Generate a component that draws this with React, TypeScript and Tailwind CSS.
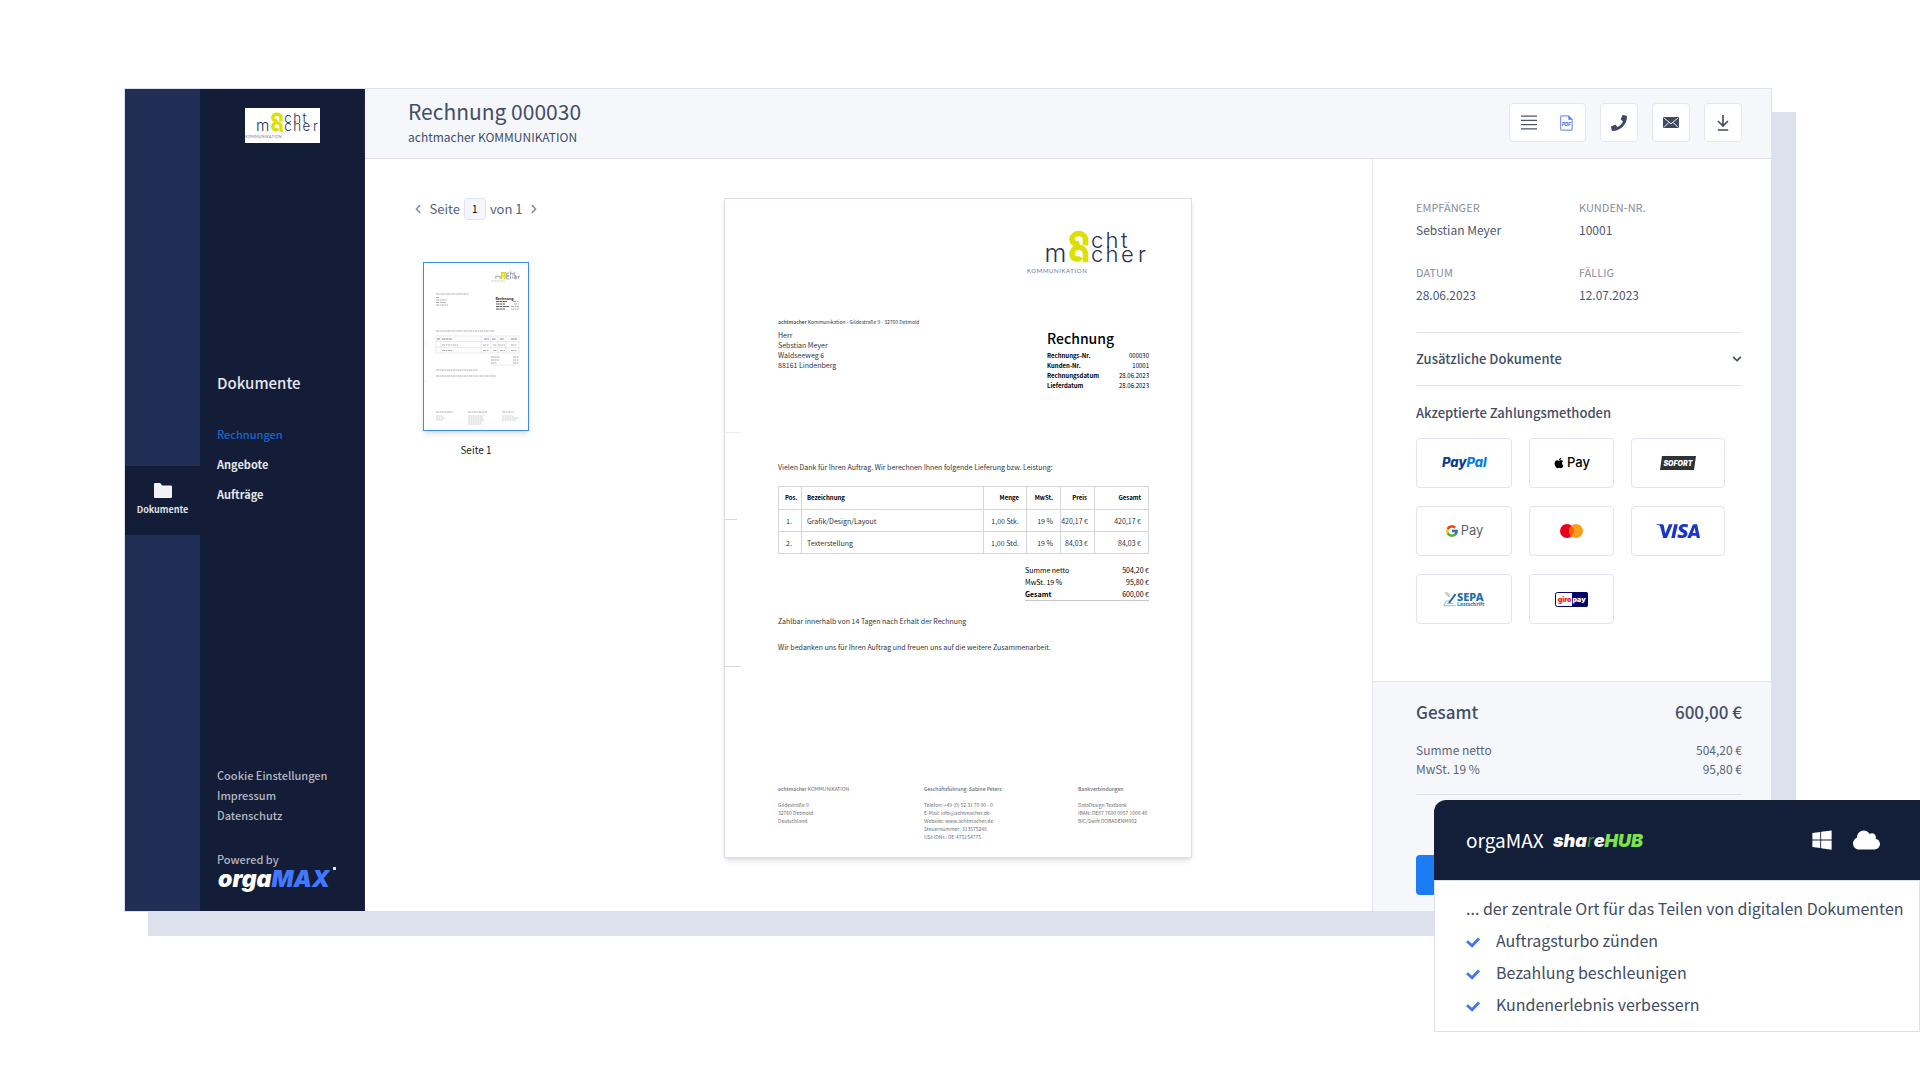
import React from 'react';
import { FaApple, FaChevronDown, FaChevronLeft, FaChevronRight, FaCloud, FaPhone, FaWindows } from 'react-icons/fa';
import { FcGoogle } from 'react-icons/fc';
import { SiVisa } from 'react-icons/si';

const footerLinks = ['Cookie Einstellungen', 'Impressum', 'Datenschutz'];

const details = [
  { label: 'EMPFÄNGER', value: 'Sebstian Meyer' },
  { label: 'KUNDEN-NR.', value: '10001' },
  { label: 'DATUM', value: '28.06.2023' },
  { label: 'FÄLLIG', value: '12.07.2023' },
];

const invoiceMeta = [
  ['Rechnungs-Nr.', '000030'],
  ['Kunden-Nr.', '10001'],
  ['Rechnungsdatum', '28.06.2023'],
  ['Lieferdatum', '28.06.2023'],
];

const positions = [
  { pos: '1.', name: 'Grafik/Design/Layout', amount: '1,00 Stk.', tax: '19 %', price: '420,17 €', total: '420,17 €' },
  { pos: '2.', name: 'Texterstellung', amount: '1,00 Std.', tax: '19 %', price: '84,03 €', total: '84,03 €' },
];

const benefits = ['Auftragsturbo zünden', 'Bezahlung beschleunigen', 'Kundenerlebnis verbessern'];

const CompanyLogo: React.FC<{ className?: string }> = ({ className }) => (
  <svg viewBox="0 0 122 46" className={className} role="img" aria-label="achtmacher Kommunikation">
    <g fill="none" stroke="#dde005" strokeWidth="5.5">
      <path d="M52.5 13.2 C48 15 45 12.5 45 9 A6.8 6.3 0 0 1 58.5 9 V15" />
      <path d="M53.5 27 C51.5 30.5 45 29.5 45 23.5 A6.8 7 0 0 1 58.5 23.5 V32.3" />
    </g>
    <g fill="#2a3157" fontFamily="Inter, sans-serif" fontWeight="300" fontSize="22">
      <text x="17.5" y="32" fontSize="25">m</text>
      <text y="18" x="64 78.500 94">cht</text>
      <text y="32" x="64 78.500 94 111">cher</text>
    </g>
    <text x="0" y="43" fill="#6d7390" fontFamily="Lato, sans-serif" fontSize="6" letterSpacing="0.6">KOMMUNIKATION</text>
  </svg>
);

const FolderIcon: React.FC = () => (
  <svg viewBox="0 0 18 15" className="w-[18px] h-[15px]" fill="#f1f2f6">
    <path d="M1 0h5.2l2 2.4H17a1 1 0 0 1 1 1V14a1 1 0 0 1-1 1H1a1 1 0 0 1-1-1V1a1 1 0 0 1 1-1z" />
  </svg>
);

const LinesIcon: React.FC = () => (
  <svg viewBox="0 0 16 15" className="w-4 h-[15px]" fill="none" stroke="#4a5468" strokeWidth="1.3">
    <path d="M0 1.2h16M0 5.4h16M0 9.6h16M0 13.8h16" />
  </svg>
);

const PdfIcon: React.FC = () => (
  <svg viewBox="0 0 13 16" className="w-[13px] h-4" fill="none" stroke="#7f97ee" strokeWidth="1.2">
    <path d="M1.6.8h6.9l3.7 3.7v9.7a1 1 0 0 1-1 1H1.6a1 1 0 0 1-1-1V1.8a1 1 0 0 1 1-1z" />
    <path d="M8.3.8v3.9h3.9z" fill="#5d7ae8" stroke="none" />
    <text x="6.4" y="11" textAnchor="middle" fontSize="4.4" fontWeight="800" fontStyle="italic" fontFamily="Inter, sans-serif" fill="#4967e0" stroke="none">PDF</text>
  </svg>
);

const MailIcon: React.FC = () => (
  <svg viewBox="0 0 16 11" className="w-4 h-[11px]">
    <rect width="16" height="11" rx="1.2" fill="#3f4a60" />
    <path d="M1.2 1.2 8 6.8l6.8-5.6M1.2 10l4.6-4.4M14.8 10l-4.6-4.4" fill="none" stroke="#fff" strokeWidth="0.9" />
  </svg>
);

const DownloadIcon: React.FC = () => (
  <svg viewBox="0 0 12 16" className="w-3 h-4" fill="none" stroke="#3f4a60" strokeWidth="1.6">
    <path d="M6 0v10.6M1 6l5 5 5-5M.8 15h10.4" />
  </svg>
);

const CheckIcon: React.FC = () => (
  <svg viewBox="0 0 14 11" className="w-[14px] h-[11px] mt-1" fill="none" stroke="#3f74fb" strokeWidth="2.8">
    <path d="M1 4.2l5 4.6L13 1.4" />
  </svg>
);

const Rail: React.FC = () => (
  <nav className="w-[75px] bg-[#202d54] flex flex-col justify-center">
    <a href="#dokumente" className="h-[69px] bg-[#141d37] flex flex-col items-center justify-center gap-1 text-[9px] leading-4 font-bold text-[#dfe1e8]">
      <FolderIcon />
      Dokumente
    </a>
  </nav>
);

const Sidebar: React.FC = () => (
  <div className="w-[165px] bg-[#141d37] border-r border-[#1d2748] flex flex-col pt-[19px] pb-4 pl-[17px] text-[#e4e6ec]">
    <div className="w-[75px] h-[35px] ml-7 bg-white flex items-center justify-center">
      <CompanyLogo className="w-[75px] h-[28px]" />
    </div>
    <h2 className="mt-[228px] text-[15px] leading-6 font-medium">Dokumente</h2>
    <ul className="mt-7 text-[11px] leading-[22px] font-bold space-y-2">
      <li><a href="#rechnungen" className="font-medium text-[#1c65c8]">Rechnungen</a></li>
      <li><a href="#angebote">Angebote</a></li>
      <li><a href="#auftraege">Aufträge</a></li>
    </ul>
    <div className="mt-auto text-[11px] leading-5 font-medium text-[#b3b6c0]">
      {footerLinks.map((link) => (
        <a key={link} href={`#${link}`} className="block">{link}</a>
      ))}
      <p className="mt-6">Powered by</p>
      <svg viewBox="0 0 120 30" className="w-[120px] h-[30px] -mt-1" fontFamily="Inter, sans-serif" fontWeight="900" fontStyle="italic" fontSize="23">
        <text x="1" y="22" fill="#fff">orga<tspan fill="#4278ff">MAX</tspan></text>
        <rect x="116" y="2" width="3" height="3" fill="#dfe3f0" />
      </svg>
    </div>
  </div>
);

const Header: React.FC = () => {
  const button = 'h-[39px] w-[38px] bg-white border border-[#e4e7f1] rounded flex items-center justify-center';
  return (
    <header className="h-[70px] bg-[#f5f7fb] border-b border-[#dde1ee] flex items-center justify-between pb-0.5 pl-[43px] pr-[29px] text-[#434e66]">
      <div>
        <h1 className="text-[21px] leading-6">Rechnung 000030</h1>
        <p className="mt-1 text-xs leading-5">achtmacher KOMMUNIKATION</p>
      </div>
      <div className="flex gap-[14px]">
        <div className="h-[39px] w-[77px] bg-white border border-[#e4e7f1] rounded flex">
          <button aria-label="Details" className="flex-1 flex items-center justify-center"><LinesIcon /></button>
          <button aria-label="PDF" className="flex-1 flex items-center justify-center"><PdfIcon /></button>
        </div>
        <button aria-label="Anrufen" className={button}><FaPhone className="size-4 text-[#3f4a60]" /></button>
        <button aria-label="E-Mail" className={button}><MailIcon /></button>
        <button aria-label="Herunterladen" className={button}><DownloadIcon /></button>
      </div>
    </header>
  );
};

// Small preview of the page, text is only hinted at with lines
const Thumbnail: React.FC = () => (
  <svg viewBox="0 0 104 167" className="w-full h-full" preserveAspectRatio="none">
    <svg x="67" y="8" width="29" height="11" viewBox="0 0 122 44">
      <path d="M45 16V7h14v9M45 32V19h14v13" fill="none" stroke="#dde005" strokeWidth="7" />
      <path d="M20 32V21h18v11M76 18H66V8h10M82 0v18M82 8h10v10M98 2v16h6M76 32H66V21h10M82 21v11M92 32V21M100 26h10v-5h-10v11h10M116 32V21h8" fill="none" stroke="#7b8099" strokeWidth="3" />
      <path d="M0 41h60" stroke="#a9acb9" strokeWidth="3" strokeDasharray="4 2" />
    </svg>
    <g fill="none" stroke="#a3a5ab" strokeWidth="0.9" strokeDasharray="3 .6 1.4 .5">
      <path d="M12 31h33M12 34.500h3M12 37h11M12 39.500h10M12 42h12" />
      <path d="M12 68h59M12 107h42M12 113h60" />
      <path d="M12 149h17M44 149h19M78 149h12" />
      <path d="M89 38.500h6M90 41h5M87 43.500h8M87 46h8" />
      <path d="M67 94h9M67 97h8M89 94h6M89 97h6M67 100h6M89 100h6" />
      <path d="M18 82h16M59 82h6M69 82h4M74 82h7M87 82h6M18 87.500h11M59 87.500h6M69 87.500h4M76 87.500h5M87 87.500h6" />
    </g>
    <g fill="none" stroke="#c0c2c8" strokeWidth="0.8" strokeDasharray="2 .4">
      <path d="M12 153h7M12 155h9M12 157h7M44 153h16M44 155h15M44 157h16M44 159h14M44 161h13M78 153h11M78 155h17M78 157h14" />
    </g>
    <path d="M72 38.500h11M72 41h9M72 43.500h13M72 46h9" fill="none" stroke="#55575d" strokeWidth="1" strokeDasharray="3 .4" />
    <path d="M13 76h3M18 76h10M60 76h5M68 76h4M76 76h4M87 76h6" fill="none" stroke="#85878d" strokeWidth="1" strokeDasharray="3 .4" />
    <path d="M12 73h83v17h-83zM12 78.500h83M12 84.500h83M17 73v17M57 73v17M67 73v17M74 73v17M82 73v17M67 102h28" fill="none" stroke="#dcdde0" strokeWidth="0.6" />
    <path d="M0 81h3M0 118h3" stroke="#e2e3e6" strokeWidth="0.6" />
    <text x="71.500" y="37" fontSize="3.6" fontWeight="700" fontFamily="Noto Sans, sans-serif" fill="#222">Rechnung</text>
  </svg>
);

const Pages: React.FC = () => (
  <div className="w-[179px] pl-[43px] flex flex-col items-center">
    <div className="flex items-center text-[13px] leading-[22px] text-[#56617a]">
      <button aria-label="Vorherige Seite"><FaChevronLeft className="w-2 h-[10px] text-[#8f9299]" /></button>
      <label htmlFor="page" className="ml-[7px]">Seite</label>
      <input id="page" defaultValue="1" className="mx-1 w-[22px] h-[22px] border border-[#e1e5f3] rounded-[3px] bg-[#f5f7fb] text-center text-[10px] text-black" />
      <span>von 1</span>
      <button aria-label="Nächste Seite" className="ml-[7px]"><FaChevronRight className="w-2 h-[10px] text-[#8f9299]" /></button>
    </div>
    <button aria-label="Seite 1 anzeigen" className="mt-[42px] w-[106px] h-[169px] border border-[#3d8bec] bg-white shadow-md">
      <Thumbnail />
    </button>
    <p className="mt-[9px] text-[10px] leading-5 text-[#222]">Seite 1</p>
  </div>
);

const Invoice: React.FC = () => {
  const cell = 'border border-[#d5d6da]';
  return (
    <article className="relative w-[468px] min-h-[660px] bg-white border border-[#dcdeec] shadow-md pt-[31px] pb-4 pl-[53px] pr-[42px] flex flex-col text-[7px] leading-[10px] text-[#33353a]">
      <span className="absolute left-0 top-[233px] w-4 h-px bg-[#eceded]" />
      <span className="absolute left-0 top-[320px] w-3 h-px bg-[#d8d9dc]" />
      <span className="absolute left-0 top-[467px] w-4 h-px bg-[#d8d9dc]" />
      <CompanyLogo className="w-[122px] h-[46px] self-end" />

      <div className="mt-[41px] flex justify-between">
        <address className="not-italic">
          <p className="text-[5px]"><span className="font-medium">achtmacher</span> Kommunikation - Gildestraße 9 - 32760 Detmold</p>
          <p className="mt-[3px]">Herr<br />Sebstian Meyer<br />Waldseeweg 6<br />88161 Lindenberg</p>
        </address>
        <div className="w-[102px] pt-[13px] text-black">
          <h2 className="text-sm leading-4 font-medium">Rechnung</h2>
          <dl className="mt-[5px] text-[6px]">
            {invoiceMeta.map(([label, value]) => (
              <div key={label} className="flex justify-between">
                <dt className="font-bold">{label}</dt>
                <dd>{value}</dd>
              </div>
            ))}
          </dl>
        </div>
      </div>

      <p className="mt-[71px]">Vielen Dank für Ihren Auftrag. Wir berechnen Ihnen folgende Lieferung bzw. Leistung:</p>

      <table className="mt-[14px] w-full table-fixed border-collapse text-right">
        <thead>
          <tr className="h-[23px] text-[6px] font-bold text-black">
            <th scope="col" className={`${cell} w-[23px] pl-[6px] text-left`}>Pos.</th>
            <th scope="col" className={`${cell} pl-[5px] text-left`}>Bezeichnung</th>
            <th scope="col" className={`${cell} w-[43px] pr-[7px]`}>Menge</th>
            <th scope="col" className={`${cell} w-[34px] pr-[7px]`}>MwSt.</th>
            <th scope="col" className={`${cell} w-[34px] pr-[7px]`}>Preis</th>
            <th scope="col" className={`${cell} w-[54px] pr-[7px]`}>Gesamt</th>
          </tr>
        </thead>
        <tbody>
          {positions.map((row) => (
            <tr key={row.pos} className="h-[22px]">
              <td className={`${cell} pl-[7px] text-left`}>{row.pos}</td>
              <td className={`${cell} pl-[5px] text-left`}>{row.name}</td>
              <td className={`${cell} pr-[7px]`}>{row.amount}</td>
              <td className={`${cell} pr-[7px]`}>{row.tax}</td>
              <td className={`${cell} pr-[6px]`}>{row.price}</td>
              <td className={`${cell} pr-[7px]`}>{row.total}</td>
            </tr>
          ))}
        </tbody>
      </table>

      <div className="mt-[10px] w-[124px] self-end leading-3 border-b border-[#c6c7cb] text-black">
        <p className="flex justify-between"><span>Summe netto</span><span>504,20 €</span></p>
        <p className="flex justify-between"><span>MwSt. 19 %</span><span>95,80 €</span></p>
        <p className="flex justify-between"><b>Gesamt</b><span>600,00 €</span></p>
      </div>

      <p className="mt-[15px]">Zahlbar innerhalb von 14 Tagen nach Erhalt der Rechnung</p>
      <p className="mt-4">Wir bedanken uns für Ihren Auftrag und freuen uns auf die weitere Zusammenarbeit.</p>

      <footer className="mt-auto grid grid-cols-[146px_154px_1fr] text-[5px] leading-2 text-[#6c6e74] whitespace-nowrap">
        <div>
          <p className="mb-2"><b className="font-medium">achtmacher</b> KOMMUNIKATION</p>
          <p>Gildestraße 9<br />32760 Detmold<br />Deutschland</p>
        </div>
        <div>
          <p className="mb-2 font-medium">Geschäftsführung: Sabine Peters</p>
          <p>Telefon: +49 (0) 52 31 70 90 - 0<br />E-Mail: info@achtmacher.de<br />Website: www.achtmacher.de<br />Steuernummer: 313575248<br />USt-IDNr.: DE-475154775</p>
        </div>
        <div>
          <p className="mb-2 font-medium">Bankverbindungen</p>
          <p>DataDesign Testbank<br />IBAN: DE87 7600 0957 1000 40<br />BIC/Swift DOBADENM002</p>
        </div>
      </footer>
    </article>
  );
};

const PayPalLogo: React.FC = () => (
  <svg viewBox="0 0 46 16" className="w-[46px] h-4" fontFamily="Inter, sans-serif" fontWeight="800" fontStyle="italic" fontSize="13">
    <text x="1" y="12" fill="#0a3a8c">Pay<tspan fill="#0a7be8">Pal</tspan></text>
  </svg>
);

const SofortLogo: React.FC = () => (
  <svg viewBox="0 0 36 14" className="w-9 h-[14px]">
    <path d="M2 0h34l-2 14H0z" fill="#2d3336" />
    <text x="18" y="9.500" textAnchor="middle" fill="#fff" fontFamily="Inter, sans-serif" fontWeight="900" fontStyle="italic" fontSize="7">SOFORT</text>
  </svg>
);

const MastercardLogo: React.FC = () => (
  <svg viewBox="0 0 23 14" className="w-[23px] h-[14px]">
    <circle cx="7" cy="7" r="7" fill="#eb001b" />
    <circle cx="16" cy="7" r="7" fill="#f79e1b" />
    <path d="M11.500 1.640a7 7 0 0 1 0 10.720 7 7 0 0 1 0-10.720z" fill="#ff5f00" />
  </svg>
);

const SepaLogo: React.FC = () => (
  <svg viewBox="0 0 42 18" className="w-[42px] h-[18px]">
    <path d="M1 15.500 3 11h5M.5 15.700h12.500M3.500 13.500h7" fill="none" stroke="#9cbfdb" strokeWidth="1" />
    <path d="M2 2.500 6.500 7.500M3.500 2l3.500 4" fill="none" stroke="#c5cbd2" strokeWidth="1.2" />
    <path d="M6 13 12.500 4" stroke="#1a6aa8" strokeWidth="2" />
    <text x="14" y="10.500" fill="#1b6cab" fontFamily="Noto Sans, sans-serif" fontWeight="800" fontSize="11">SEPA</text>
    <text x="14" y="15.500" fill="#2f83bd" fontFamily="Noto Sans, sans-serif" fontWeight="800" fontSize="5">Lastschrift</text>
  </svg>
);

const GiropayLogo: React.FC = () => (
  <svg viewBox="0 0 33 15" className="w-[33px] h-[15px]">
    <rect x=".5" y=".5" width="32" height="14" rx="2" fill="#fff" stroke="#000268" />
    <path d="M17 0h14a2 2 0 0 1 2 2v11a2 2 0 0 1-2 2H17z" fill="#000268" />
    <g fontFamily="Inter, sans-serif" fontWeight="900" fontSize="7">
      <text x="16.500" y="9.500" textAnchor="end" fill="#f0142f">giro</text>
      <text x="17.500" y="9.500" fill="#fff">pay</text>
    </g>
  </svg>
);

const paymentMethods = [
  { name: 'PayPal', logo: <PayPalLogo /> },
  { name: 'Apple Pay', logo: <span className="flex items-center gap-[2px] font-['Inter',sans-serif] text-[13px] font-medium text-black"><FaApple className="size-3" />Pay</span> },
  { name: 'SOFORT', logo: <SofortLogo /> },
  { name: 'Google Pay', logo: <span className="flex items-center gap-[2px] font-['Inter',sans-serif] text-[13px] text-[#5f6368]"><FcGoogle className="size-[14px]" />Pay</span> },
  { name: 'Mastercard', logo: <MastercardLogo /> },
  { name: 'Visa', logo: <SiVisa className="size-[44px] text-[#1a35cc]" /> },
  { name: 'SEPA Lastschrift', logo: <SepaLogo /> },
  { name: 'giropay', logo: <GiropayLogo /> },
];

const Details: React.FC = () => (
  <aside className="w-[399px] border-l border-[#e4e7f1] flex flex-col text-[#434e66]">
    <div className="pt-[39px] pl-[43px] pr-[29px]">
      <dl className="grid grid-cols-2">
        {details.map((item) => (
          <div key={item.label} className="h-[65px]">
            <dt className="text-[11px] leading-[18px] text-[#868d9c]">{item.label}</dt>
            <dd className="mt-[5px] text-xs leading-[18px] text-[#4d5870]">{item.value}</dd>
          </div>
        ))}
      </dl>
      <button className="mt-1 w-full h-[54px] border-y border-[#e1e4ef] flex items-center justify-between text-[13px] font-medium">
        Zusätzliche Dokumente
        <FaChevronDown className="size-[10px]" />
      </button>
      <h3 className="mt-[17px] text-[13px] leading-5 font-medium">Akzeptierte Zahlungsmethoden</h3>
      <div className="mt-[15px] grid grid-cols-[96px_85px_94px] gap-x-[17px] gap-y-[18px]">
        {paymentMethods.map((method) => (
          <button key={method.name} aria-label={method.name} className="h-[50px] border border-[#e2e5f1] rounded flex items-center justify-center">
            {method.logo}
          </button>
        ))}
      </div>
    </div>
    <div className="mt-auto bg-[#f5f7fb] border-t border-[#dfe5f2] pt-[18px] pb-4 pl-[43px] pr-[29px]">
      <p className="flex justify-between text-[17px] leading-6 font-medium"><span>Gesamt</span><span>600,00 €</span></p>
      <div className="mt-4 pb-4 border-b border-[#dfe2ee] text-xs leading-[19px] text-[#5b657b]">
        <p className="flex justify-between"><span>Summe netto</span><span>504,20 €</span></p>
        <p className="flex justify-between"><span>MwSt. 19 %</span><span>95,80 €</span></p>
      </div>
      <button aria-label="Bezahlen" className="mt-[60px] block w-full h-10 rounded bg-[#1b7cf4]" />
    </div>
  </aside>
);

const ShareHubCard: React.FC = () => (
  <section className="absolute right-0 top-[800px] w-[486px]">
    <div className="h-20 bg-[#131e38] rounded-tl-xl flex items-center pl-8 pr-10 text-white">
      <span className="text-[19px]">orgaMAX</span>
      <svg viewBox="0 0 98 24" className="ml-2 w-[98px] h-6" fontFamily="Inter, sans-serif" fontWeight="900" fontStyle="italic" fontSize="18" fill="#fff">
        <text x="1" y="19">sha<tspan fill="#3f9f3f" fontWeight="400">r</tspan>e<tspan fill="#7be34b">HUB</tspan></text>
      </svg>
      <FaWindows className="ml-auto size-[22px]" />
      <FaCloud className="ml-5 w-[27px] h-[22px]" />
    </div>
    <div className="bg-white border border-[#dde1ec] pt-[11px] pb-[11px] pl-[31px] text-base leading-8 text-[#424c63]">
      <p>... der zentrale Ort für das Teilen von digitalen Dokumenten</p>
      <ul>
        {benefits.map((text) => (
          <li key={text} className="flex items-center gap-4">
            <CheckIcon />
            {text}
          </li>
        ))}
      </ul>
    </div>
  </section>
);

export default function App() {
  return (
    <main className="relative min-h-screen bg-white pt-[88px] pb-[136px] pl-[124px] pr-[148px] font-['Noto_Sans_CJK_SC',sans-serif]">
      <div className="flex border border-[#dde1ec] bg-white shadow-[24px_24px_0_#dde1ec]">
        <Rail />
        <Sidebar />
        <div className="flex-1 flex flex-col">
          <Header />
          <div className="flex-1 flex">
            <div className="flex-1 flex pt-[39px] pb-[53px]">
              <Pages />
              <div className="flex-1 flex justify-center">
                <Invoice />
              </div>
            </div>
            <Details />
          </div>
        </div>
      </div>
      <ShareHubCard />
    </main>
  );
}
